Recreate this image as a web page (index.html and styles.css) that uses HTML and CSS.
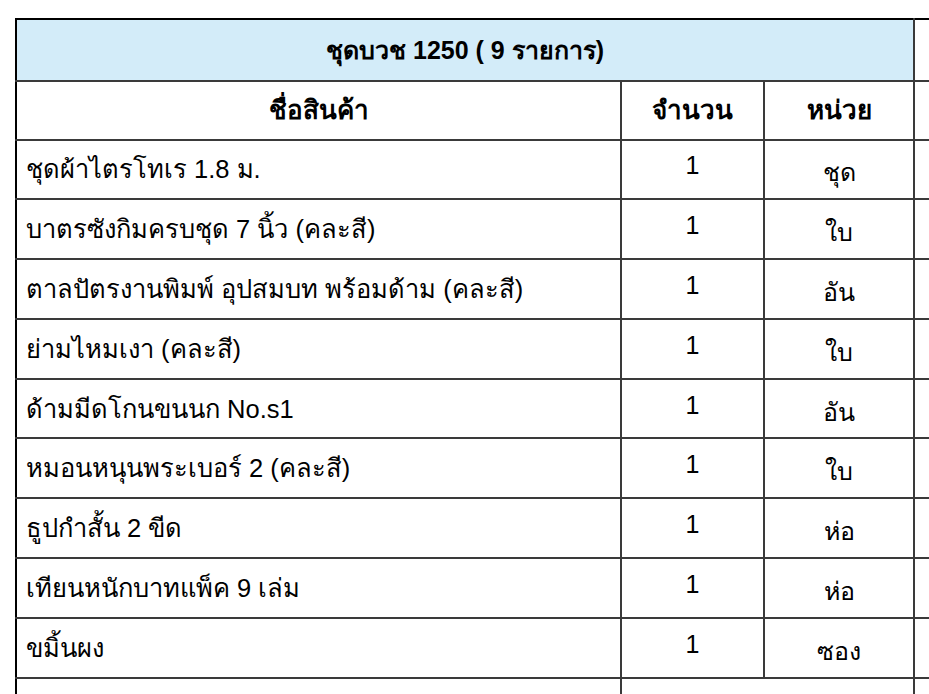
FILE: index.html
```html
<!DOCTYPE html>
<html lang="th">
<head>
<meta charset="utf-8">
<title>ชุดบวช 1250</title>
<link rel="stylesheet" href="styles.css">
</head>
<body>
<div class="page">
<table class="set-table">
  <colgroup>
    <col class="c-name">
    <col class="c-qty">
    <col class="c-unit">
    <col class="c-extra">
  </colgroup>
  <tr class="title-row">
    <th colspan="3" class="title">ชุดบวช 1250 ( 9 รายการ)</th>
    <td class="extra"></td>
  </tr>
  <tr class="head-row">
    <th>ชื่อสินค้า</th>
    <th>จำนวน</th>
    <th>หน่วย</th>
    <td class="extra"></td>
  </tr>
  <tr class="item"><td class="name">ชุดผ้าไตรโทเร 1.8 ม.</td><td class="qty">1</td><td class="unit">ชุด</td><td class="extra"></td></tr>
  <tr class="item"><td class="name">บาตรซังกิมครบชุด 7 นิ้ว (คละสี)</td><td class="qty">1</td><td class="unit">ใบ</td><td class="extra"></td></tr>
  <tr class="item"><td class="name">ตาลปัตรงานพิมพ์ อุปสมบท พร้อมด้าม (คละสี)</td><td class="qty">1</td><td class="unit">อัน</td><td class="extra"></td></tr>
  <tr class="item"><td class="name">ย่ามไหมเงา (คละสี)</td><td class="qty">1</td><td class="unit">ใบ</td><td class="extra"></td></tr>
  <tr class="item"><td class="name">ด้ามมีดโกนขนนก No.s1</td><td class="qty">1</td><td class="unit">อัน</td><td class="extra"></td></tr>
  <tr class="item"><td class="name">หมอนหนุนพระเบอร์ 2 (คละสี)</td><td class="qty">1</td><td class="unit">ใบ</td><td class="extra"></td></tr>
  <tr class="item"><td class="name">ธูปกำสั้น 2 ขีด</td><td class="qty">1</td><td class="unit">ห่อ</td><td class="extra"></td></tr>
  <tr class="item"><td class="name">เทียนหนักบาทแพ็ค 9 เล่ม</td><td class="qty">1</td><td class="unit">ห่อ</td><td class="extra"></td></tr>
  <tr class="item"><td class="name">ขมิ้นผง</td><td class="qty">1</td><td class="unit">ซอง</td><td class="extra"></td></tr>
  <tr class="item"><td class="name"></td><td class="qty" colspan="2"></td><td class="extra"></td></tr>
</table>
</div>
</body>
</html>
```

FILE: styles.css
```css
html, body {
  margin: 0;
  padding: 0;
  background: #ffffff;
  overflow: hidden;
}

.page {
  padding: 18px 0 0 15px;
  width: 1200px;
  font-family: "Liberation Sans", "Noto Sans", sans-serif;
  color: #000;
}

.set-table {
  border-collapse: collapse;
  table-layout: fixed;
  width: 1100px;
  border-top: 2px solid #000;
  border-left: 2px solid #000;
}

.c-name { width: 605px; }
.c-qty { width: 143px; }
.c-unit { width: 150px; }
.c-extra { width: 202px; }

.set-table th,
.set-table td {
  border: 2px solid #3a3a3a;
  padding: 0;
  font-size: 25px;
  line-height: 28px;
  text-align: center;
  vertical-align: middle;
}

.set-table tr:first-child th,
.set-table tr:first-child td {
  border-top: 2px solid #000;
}

.set-table tr > :first-child {
  border-left: 2px solid #000;
}

.title-row { height: 62px; }
.title {
  background: #d3ecf9;
  font-weight: bold;
  font-size: 25px;
}

.head-row { height: 58.5px; }
.head-row th {
  font-weight: bold;
  font-size: 26px;
}

.item { height: 59.8px; }

.set-table td.name {
  text-align: left;
  padding-left: 9px;
  font-size: 25.5px;
}

.set-table td.qty {
  padding-bottom: 8px;
}

.set-table td.unit {
  padding-top: 6px;
}

.set-table td.extra {
  border-right: none;
}
```
